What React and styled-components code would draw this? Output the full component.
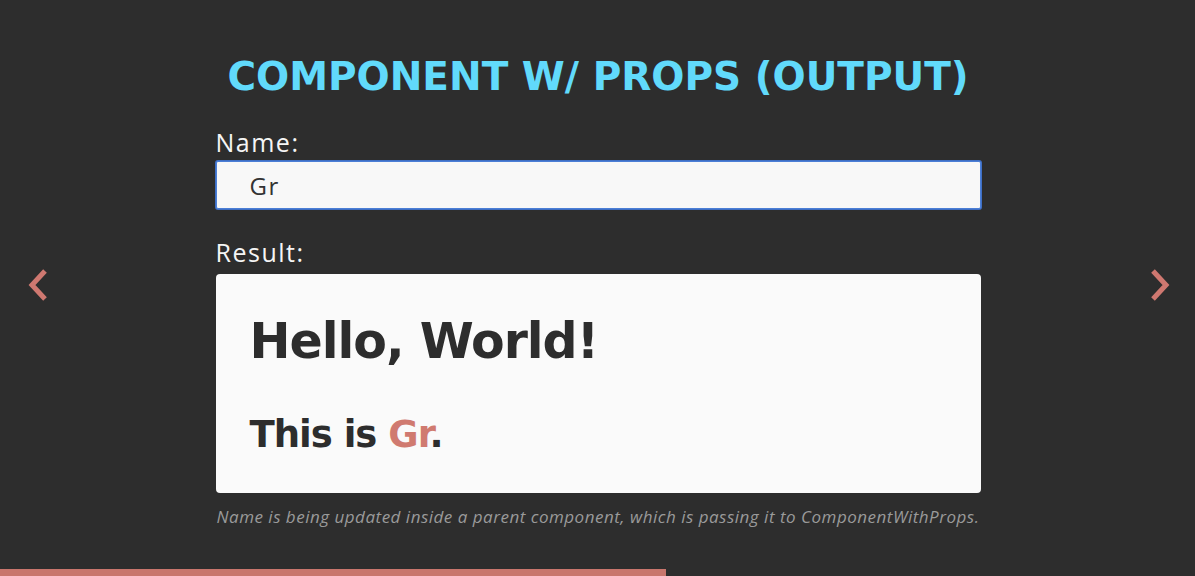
import styled, { createGlobalStyle } from "styled-components";

const GlobalStyle = createGlobalStyle`
  html, body {
    margin: 0;
    padding: 0;
    background: #2d2d2d;
    overflow: hidden;
  }
  * { box-sizing: border-box; }
`;

const Page = styled.div`
  height: 576px;
  display: flex;
  flex-direction: column;
  font-family: "DejaVu Sans", sans-serif;
`;

const Slide = styled.div`
  flex: 1;
  display: grid;
  grid-template-columns: 1fr 766px 1fr;
  align-items: center;
`;

const Arrow = styled.button`
  background: none;
  border: none;
  padding: 0;
  color: #cf7870;
  justify-self: ${(p) => (p.side === "left" ? "start" : "end")};
  margin: ${(p) => (p.side === "left" ? "0 0 0 27px" : "0 24px 0 0")};
  display: flex;
  cursor: pointer;
`;

const Content = styled.div`
  align-self: start;
  padding-top: 54px;
  margin-left: 1px;
  display: flex;
  flex-direction: column;
`;

const Title = styled.h2`
  margin: 0 0 29px;
  text-align: center;
  color: #61dafb;
  font-size: 39px;
  font-weight: 700;
  text-transform: uppercase;
`;

const Label = styled.label`
  color: #f5f5f5;
  font-family: "Open Sans", sans-serif;
  font-size: 25px;
  letter-spacing: 1.5px;
  line-height: 28px;
  margin-bottom: 5px;
`;

const Input = styled.input`
  height: 48px;
  margin-bottom: 29px;
  padding: 0 33px;
  background: #f8f8f8;
  border: 1px solid #4c7fd6;
  box-shadow: 0 0 0 1px #3f6fc4;
  border-radius: 2px;
  font-family: "Open Sans", sans-serif;
  font-size: 24px;
  letter-spacing: 1.5px;
  color: #333;
  outline: none;
`;

const ResultBox = styled.div`
  margin-top: 3px;
  background: #fafafa;
  border-radius: 4px;
  padding: 38px 34px 34px;
`;

const Hello = styled.h1`
  margin: 0 0 39px;
  color: #2d2d2d;
  font-size: 49px;
  line-height: 60px;
  font-weight: 700;
  letter-spacing: -1px;
`;

const Greeting = styled.h2`
  margin: 0;
  color: #2d2d2d;
  font-size: 37px;
  line-height: 48px;
  font-weight: 700;
  letter-spacing: -1px;
`;

const Name = styled.span`
  color: #d07a70;
`;

const Note = styled.p`
  margin: 12px 0 0;
  text-align: center;
  color: #9a9a9a;
  font-family: "Open Sans", sans-serif;
  font-style: italic;
  font-size: 17px;
  letter-spacing: 0.5px;
  white-space: nowrap;
`;

const Progress = styled.div`
  height: 7px;
  width: ${(p) => p.value}%;
  background: #c9766d;
`;

function Chevron({ dir }) {
  return (
    <svg width="22" height="34" viewBox="0 0 22 34">
      <path
        d={dir === "left" ? "M18 3 L5 17 L18 31" : "M4 3 L17 17 L4 31"}
        fill="none"
        stroke="currentColor"
        strokeWidth="5"
      />
    </svg>
  );
}

export default function App() {
  const name = "Gr";
  return (
    <Page>
      <GlobalStyle />
      <Slide>
        <Arrow side="left" aria-label="Previous slide">
          <Chevron dir="left" />
        </Arrow>
        <Content>
          <Title>Component w/ Props (Output)</Title>
          <Label htmlFor="name">Name:</Label>
          <Input id="name" defaultValue={name} />
          <Label>Result:</Label>
          <ResultBox>
            <Hello>Hello, World!</Hello>
            <Greeting>
              This is <Name>{name}</Name>.
            </Greeting>
          </ResultBox>
          <Note>
            Name is being updated inside a parent component, which is passing it to ComponentWithProps.
          </Note>
        </Content>
        <Arrow side="right" aria-label="Next slide">
          <Chevron dir="right" />
        </Arrow>
      </Slide>
      <Progress value={55.7} />
    </Page>
  );
}
